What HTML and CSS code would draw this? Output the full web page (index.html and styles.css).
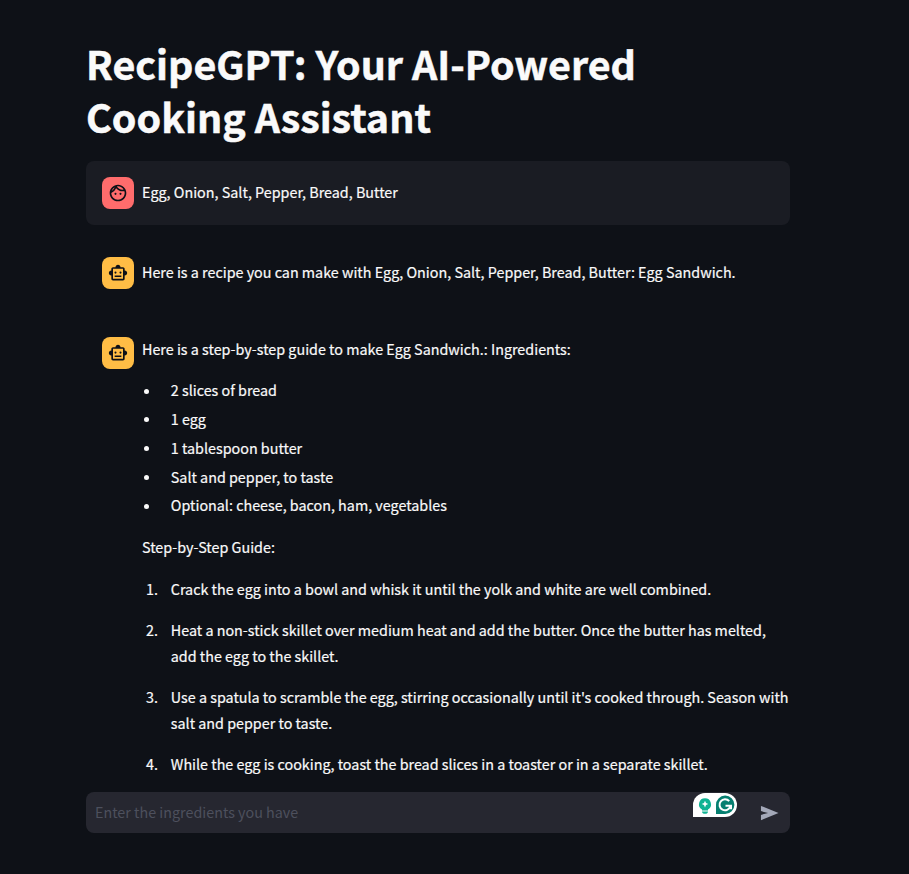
FILE: index.html
```html
<!DOCTYPE html>
<html lang="en">
<head>
<meta charset="utf-8">
<title>RecipeGPT</title>
<link rel="stylesheet" href="styles.css">
</head>
<body>
<svg width="0" height="0" class="defs">
  <symbol id="bot" viewBox="0 0 24 24"><path d="M20 9V7c0-1.100-.900-2-2-2h-3c0-1.660-1.340-3-3-3S9 3.340 9 5H6c-1.100 0-2 .900-2 2v2c-1.660 0-3 1.340-3 3s1.340 3 3 3v4c0 1.100.900 2 2 2h12c1.100 0 2-.900 2-2v-4c1.660 0 3-1.340 3-3s-1.340-3-3-3zm-2 10H6V7h12v12zM7.750 11.500a1.250 1.250 0 1 0 2.500 0a1.250 1.250 0 1 0-2.500 0zM13.750 11.500a1.250 1.250 0 1 0 2.500 0a1.250 1.250 0 1 0-2.500 0zM8 15h8v1.700H8z"/></symbol>
  <symbol id="face" viewBox="0 0 24 24"><path d="M10.250 13a1.250 1.250 0 1 1-2.500 0 1.250 1.250 0 0 1 2.500 0zM15 11.750a1.250 1.250 0 1 0 0 2.500 1.250 1.250 0 0 0 0-2.500zM22 12c0 5.520-4.480 10-10 10S2 17.520 2 12 6.480 2 12 2s10 4.480 10 10zM10.660 4.120C12.060 6.440 14.600 8 17.500 8c.460 0 .910-.050 1.340-.120C17.440 5.560 14.900 4 12 4c-.460 0-.910.050-1.340.120zM4.420 9.470a8.046 8.046 0 0 0 3.660-4.440 8.046 8.046 0 0 0-3.660 4.440zM20 12c0-.780-.120-1.530-.330-2.240-.700.150-1.420.240-2.170.240a10 10 0 0 1-7.760-3.690A10.016 10.016 0 0 1 4 11.860c.010.040 0 .090 0 .140 0 4.410 3.590 8 8 8s8-3.590 8-8z"/></symbol>
</svg>
<main class="page">
  <section class="chat">
    <h1>RecipeGPT: Your AI-Powered<br>Cooking Assistant</h1>
    <article class="message user">
      <div class="avatar red"><svg><use href="#face"/></svg></div>
      <p>Egg, Onion, Salt, Pepper, Bread, Butter</p>
    </article>
    <article class="message">
      <div class="avatar"><svg><use href="#bot"/></svg></div>
      <p>Here is a recipe you can make with Egg, Onion, Salt, Pepper, Bread, Butter: Egg Sandwich.</p>
    </article>
    <article class="message long">
      <div class="avatar"><svg><use href="#bot"/></svg></div>
      <div class="content">
        <p>Here is a step-by-step guide to make Egg Sandwich.: Ingredients:</p>
        <ul>
          <li>2 slices of bread</li>
          <li>1 egg</li>
          <li>1 tablespoon butter</li>
          <li>Salt and pepper, to taste</li>
          <li>Optional: cheese, bacon, ham, vegetables</li>
        </ul>
        <p>Step-by-Step Guide:</p>
        <ol>
          <li>Crack the egg into a bowl and whisk it until the yolk and white are well combined.</li>
          <li>Heat a non-stick skillet over medium heat and add the butter. Once the butter has melted,<br>add the egg to the skillet.</li>
          <li>Use a spatula to scramble the egg, stirring occasionally until it's cooked through. Season with<br>salt and pepper to taste.</li>
          <li>While the egg is cooking, toast the bread slices in a toaster or in a separate skillet.</li>
        </ol>
      </div>
    </article>
  </section>
  <form class="composer">
    <span class="placeholder">Enter the ingredients you have</span>
    <svg class="send" viewBox="0 0 20 16"><path d="M1 0.500 19.500 8 1 15.500V10L8.500 8 1 6z"/></svg>
    <svg class="assist" viewBox="0 0 44 24">
      <path fill="#fff" d="M0 24V12A12 12 0 0 1 12 0h20a12 12 0 0 1 0 24z"/>
      <path fill="#10b393" d="M12 5.200a6 6 0 0 0-3 11.200v1.100h6v-1.100a6 6 0 0 0-3-11.200z"/>
      <path fill="#10b393" d="M9 18.500h6c0 1.500-1.200 2.300-3 2.300s-3-.8-3-2.300z"/>
      <path fill="#fff" d="m12 7.800 1 2.300 2.300 1-2.300 1-1 2.300-1-2.300-2.300-1 2.300-1z"/>
      <path fill="#067f70" d="M23 21v-9a9.200 9.200 0 1 1 9.200 9z"/>
      <path fill="none" stroke="#fff" stroke-width="2" d="M36.200 8.200a5.500 5.500 0 1 0 1.100 5.200M32.500 12.700h5.500v3.500"/>
    </svg>
  </form>
</main>
</body>
</html>
```

FILE: styles.css
```css
* { box-sizing: border-box; }
body {
  margin: 0;
  height: 874px;
  overflow: hidden;
  background: #0e1117;
  color: #fafafa;
  font: 14.33px/25.6px "Noto Sans CJK SC", "Noto Sans", sans-serif;
  -webkit-text-stroke: 0.2px;
  white-space: nowrap;
}
.defs { position: absolute; }
.page {
  width: 704px;
  height: 874px;
  margin-left: 86px;
  display: flex;
  flex-direction: column;
}
.chat {
  height: 792px;
  padding-top: 37px;
  overflow: hidden;
  display: flex;
  flex-direction: column;
  gap: 16px;
  flex: none;
}
h1 {
  flex: none;
  margin: 0;
  height: 107.6px;
  font-size: 39.4px;
  line-height: 52.8px;
  font-weight: 700;
  -webkit-text-stroke: 0.5px;
}
p { margin: 0; }
.message {
  display: flex;
  align-items: center;
  gap: 8px;
  padding: 16px;
  border-radius: 8px;
  flex: none;
}
.message > p { padding-bottom: 2px; }
.long { align-items: flex-start; }
.content { margin-top: -1px; }
.user { background: #1a1c23; }
.avatar {
  width: 32px;
  height: 32px;
  flex: none;
  display: flex;
  align-items: center;
  justify-content: center;
  border-radius: 8px;
  background: #ffbd45;
}
.red { background: #ff6c6c; }
.avatar svg { width: 20px; height: 20px; fill: #0e1117; }
ul, ol { padding: 0; list-style: none; }
ul { margin: 14.4px 0; }
li { padding-left: 28.8px; position: relative; }
ul li { padding-top: 1.6px; padding-bottom: 1.6px; }
ul li::before {
  content: "";
  position: absolute;
  left: 2px;
  top: 13px;
  width: 5px;
  height: 5px;
  border-radius: 50%;
  background: #fafafa;
}
ol { margin: 16.6px 0 0; counter-reset: step; }
ol li { counter-increment: step; margin-bottom: 16px; }
ol li:first-child { margin-bottom: 15.4px; }
ol li::before {
  content: counter(step) ".";
  position: absolute;
  left: 4px;
}
.composer {
  position: relative;
  display: flex;
  align-items: center;
  justify-content: space-between;
  height: 41px;
  padding: 0 11px 0 9px;
  border-radius: 8px;
  background: #262730;
}
.placeholder { padding-bottom: 2px; color: #4d505d; -webkit-text-stroke: 0; }
.send { width: 19px; height: 16px; fill: #a3a8b8; }
.assist {
  position: absolute;
  left: 607px;
  top: 1px;
  width: 44px;
  height: 24px;
}
```
